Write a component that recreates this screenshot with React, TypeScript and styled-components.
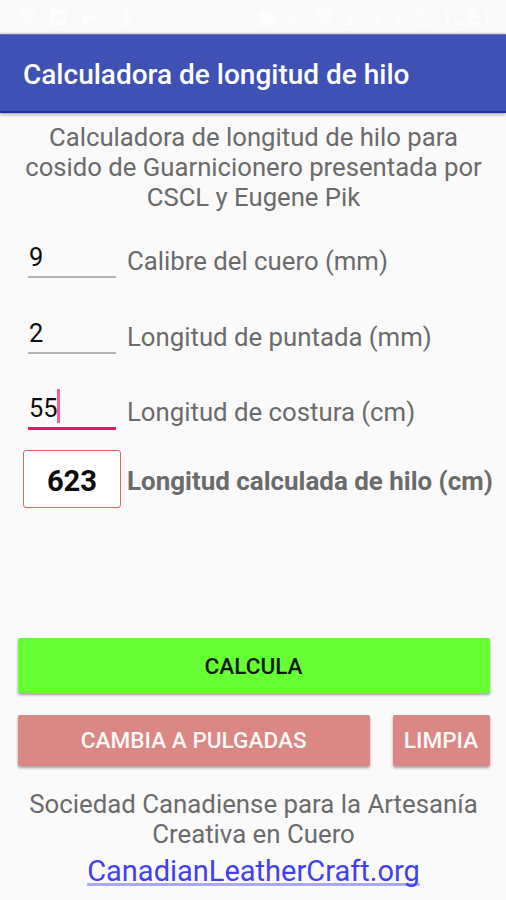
import React from "react";
import styled, { createGlobalStyle } from "styled-components";

const GlobalStyle = createGlobalStyle`
  *, *::before, *::after { box-sizing: border-box; }
  body { margin: 0; background: #fafafa; }
`;

const Screen = styled.div`
  width: 506px;
  height: 900px;
  display: flex;
  flex-direction: column;
  overflow: hidden;
  background: #fafafa;
  color: #6b6b6b;
  font: 400 25.8px/30px Roboto, sans-serif;
`;

const StatusBar = styled.header`
  display: flex;
  justify-content: space-between;
  height: 34px;
  padding: 7px 12px 7px 18px;
  background: #fafafa;

  svg { display: block; fill: #fff; }
`;

const AppBar = styled.div`
  display: flex;
  align-items: center;
  height: 79px;
  flex: none;
  padding: 4px 23px 0 23px;
  background: #3f51b5;
  border-top: 1px solid #6470b0;
  border-bottom: 2px solid #1c309f;
  box-shadow: 0 2px 3px rgba(0, 0, 0, 0.28), 0 -1px 2px rgba(0, 0, 0, 0.16);
`;

const Title = styled.h1`
  margin: 0;
  color: #fff;
  font-size: 28px;
  font-weight: 500;
  line-height: 34px;
  white-space: nowrap;
`;

const Intro = styled.p`
  margin: 9px 0 0;
  padding-left: 1px;
  font-size: 25.7px;
  text-align: center;
  white-space: pre-line;
`;

const Fields = styled.div`
  display: grid;
  grid-auto-rows: 75.7px;
  padding: 24px 0 0 28px;
`;

const FieldRow = styled.label`
  display: grid;
  grid-template-columns: 88px 1fr;
  column-gap: 11px;
  align-items: start;
`;

const Entry = styled.span<{ $active?: boolean }>`
  display: flex;
  height: ${(p) => (p.$active ? 43 : 42)}px;
  padding: 6px 0 0 1px;
  color: #0c0c0c;
  font-size: 25.4px;
  border-bottom: ${(p) => (p.$active ? "3px solid #e3196c" : "2px solid #b4b4b4")};
`;

const Caret = styled.i`
  width: 3px;
  height: 34px;
  margin: -4px 0 0 -0.5px;
  background: #ff5c93;
`;

const FieldName = styled.span<{ $strong?: boolean }>`
  padding-top: ${(p) => (p.$strong ? 3 : 10)}px;
  font-size: ${(p) => (p.$strong ? 25.95 : 25.75)}px;
  font-weight: ${(p) => (p.$strong ? 700 : 400)};
  white-space: nowrap;
`;

const ResultRow = styled.div`
  display: grid;
  grid-template-columns: 98px 1fr;
  column-gap: 6px;
  align-items: center;
  height: 58px;
  margin: -13px 0 0 23px;
`;

const Result = styled.output`
  display: grid;
  place-items: center;
  height: 58px;
  padding-top: 4px;
  color: #0c0c0c;
  font-size: 29.2px;
  font-weight: 700;
  background: #fff;
  border: 1.5px solid #f4605e;
  border-radius: 3px;
`;

const Actions = styled.div`
  display: grid;
  grid-template-columns: 352.5px 97px;
  grid-template-rows: 55px 50.5px;
  gap: 22px 22.5px;
  margin: 130px 0 0 17.5px;
`;

const Button = styled.button<{ $primary?: boolean }>`
  grid-column: ${(p) => (p.$primary ? "1 / -1" : "auto")};
  margin: 0;
  padding: 2px 0 0;
  border: 0;
  border-radius: 2px;
  color: ${(p) => (p.$primary ? "#0b1a05" : "#fff8f6")};
  background: ${(p) => (p.$primary ? "#66ff33" : "#db8786")};
  font: 500 22.6px/28px Roboto, sans-serif;
  box-shadow: 0 2px 3px rgba(0, 0, 0, 0.36);
`;

const Footer = styled.footer`
  margin-top: 23.5px;
  text-align: center;
`;

const Society = styled.p`
  margin: 0;
  padding-left: 1px;
  white-space: pre-line;
`;

const SiteLink = styled.a`
  display: inline-block;
  margin: 5px 0 0 1px;
  height: 32px;
  color: #423ff0;
  font-size: 29px;
  line-height: 34px;
  text-decoration: underline;
  text-decoration-color: #aaa9fa;
  text-decoration-thickness: 2.5px;
  text-underline-offset: 2px;
  text-decoration-skip-ink: none;
`;

const NoticeIcons = () => (
  <svg width="130" height="20" viewBox="0 0 130 20" opacity="0.6">
    <path d="M0 5q9-6 18 0L9 19z" />
    <path d="M33 2h15v16H33zm3 4v8h9V6z" fillRule="evenodd" />
    <path d="m65 4 5 5 10 2-8 2-7 5z" />
    <path d="M107 1h4v8h3v2h-3v8h-3v-8h-3V9h2z" />
  </svg>
);

const SystemIcons = () => (
  <svg width="244" height="20" viewBox="0 0 244 20" opacity="0.6">
    <circle cx="16" cy="11" r="9" />
    <path d="m40 4 8 12m0-12-8 12" stroke="#fff" strokeWidth="2" />
    <path d="M64 5q11-7 22 0L75 19z" />
    <path d="M95 18V11l8-6v13zM123 10l7-5v12zM142 12l8-5v10z" />
    <circle cx="175" cy="10" r="8" stroke="#fff" strokeWidth="2" fillOpacity="0" />
    <path d="M196 3h3v15h-3zM204 15h10v3h-10zM218 3h10v7h-7v5h7v3h-10zM236 3h3v15h-3z" />
  </svg>
);

const fields = [
  { name: "Calibre del cuero (mm)", value: "9" },
  { name: "Longitud de puntada (mm)", value: "2" },
  { name: "Longitud de costura (cm)", value: "55", active: true },
];

export default function App() {
  return (
    <Screen>
      <GlobalStyle />
      <StatusBar>
        <NoticeIcons />
        <SystemIcons />
      </StatusBar>
      <AppBar>
        <Title>Calculadora de longitud de hilo</Title>
      </AppBar>
      <Intro>
        {"Calculadora de longitud de hilo para\ncosido de Guarnicionero presentada por\nCSCL y Eugene Pik"}
      </Intro>
      <Fields>
        {fields.map((f) => (
          <FieldRow key={f.name}>
            <Entry $active={f.active}>
              {f.value}
              {f.active && <Caret />}
            </Entry>
            <FieldName>{f.name}</FieldName>
          </FieldRow>
        ))}
      </Fields>
      <ResultRow>
        <Result>623</Result>
        <FieldName $strong>Longitud calculada de hilo (cm)</FieldName>
      </ResultRow>
      <Actions>
        <Button $primary>CALCULA</Button>
        <Button>CAMBIA A PULGADAS</Button>
        <Button>LIMPIA</Button>
      </Actions>
      <Footer>
        <Society>{"Sociedad Canadiense para la Artesanía\nCreativa en Cuero"}</Society>
        <SiteLink>CanadianLeatherCraft.org</SiteLink>
      </Footer>
    </Screen>
  );
}
